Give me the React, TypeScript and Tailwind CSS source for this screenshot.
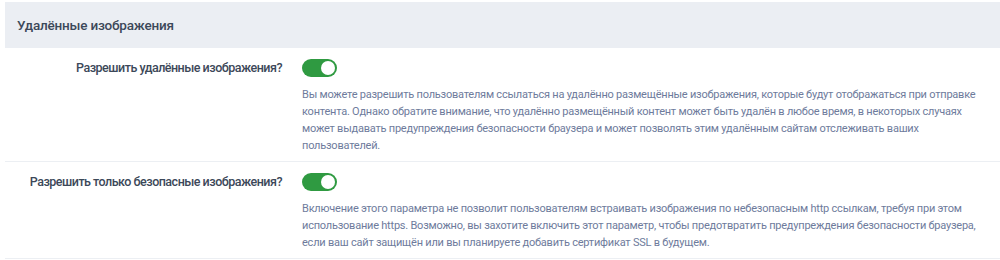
import React from "react";

const font = { fontFamily: 'Roboto, "Noto Sans", sans-serif' };

function Toggle() {
  return (
    <div className="flex h-[18px] w-[35px] items-center justify-end rounded-full bg-[#2f9a41] px-[2px]">
      <div className="h-[14px] w-[14px] rounded-full bg-white" />
    </div>
  );
}

function Row({ label, lines }: { label: string; lines: string[] }) {
  return (
    <div className="flex border-b border-[#eceff3] pt-[11px] pb-[7px]">
      <div className="w-[277px] shrink-0 whitespace-nowrap pt-[1px] text-right text-[12.5px] font-medium leading-[16px] tracking-[-0.5px] text-[#3c4859]">
        {label}
      </div>
      <div className="ml-[20px] flex-1">
        <Toggle />
        <div className="mt-[9px] text-[11px] leading-[17px] tracking-[-0.22px] text-[#6e7b9c]">
          {lines.map((l, i) => (
            <div key={i} className="whitespace-nowrap">
              {l}
            </div>
          ))}
        </div>
      </div>
    </div>
  );
}

export default function App() {
  return (
    <div className="h-[260px] w-[1000px] bg-white pt-[2px] pl-[5px]" style={font}>
      <div className="flex h-[46px] items-center bg-[#ebeef3] px-[12px] text-[13.5px] font-medium tracking-[-0.2px] text-[#3c4859]">
        Удалённые изображения
      </div>
      <Row
        label="Разрешить удалённые изображения?"
        lines={[
          "Вы можете разрешить пользователям ссылаться на удалённо размещённые изображения, которые будут отображаться при отправке",
          "контента. Однако обратите внимание, что удалённо размещённый контент может быть удалён в любое время, в некоторых случаях",
          "может выдавать предупреждения безопасности браузера и может позволять этим удалённым сайтам отслеживать ваших",
          "пользователей.",
        ]}
      />
      <Row
        label="Разрешить только безопасные изображения?"
        lines={[
          "Включение этого параметра не позволит пользователям встраивать изображения по небезопасным http ссылкам, требуя при этом",
          "использование https. Возможно, вы захотите включить этот параметр, чтобы предотвратить предупреждения безопасности браузера,",
          "если ваш сайт защищён или вы планируете добавить сертификат SSL в будущем.",
        ]}
      />
    </div>
  );
}
